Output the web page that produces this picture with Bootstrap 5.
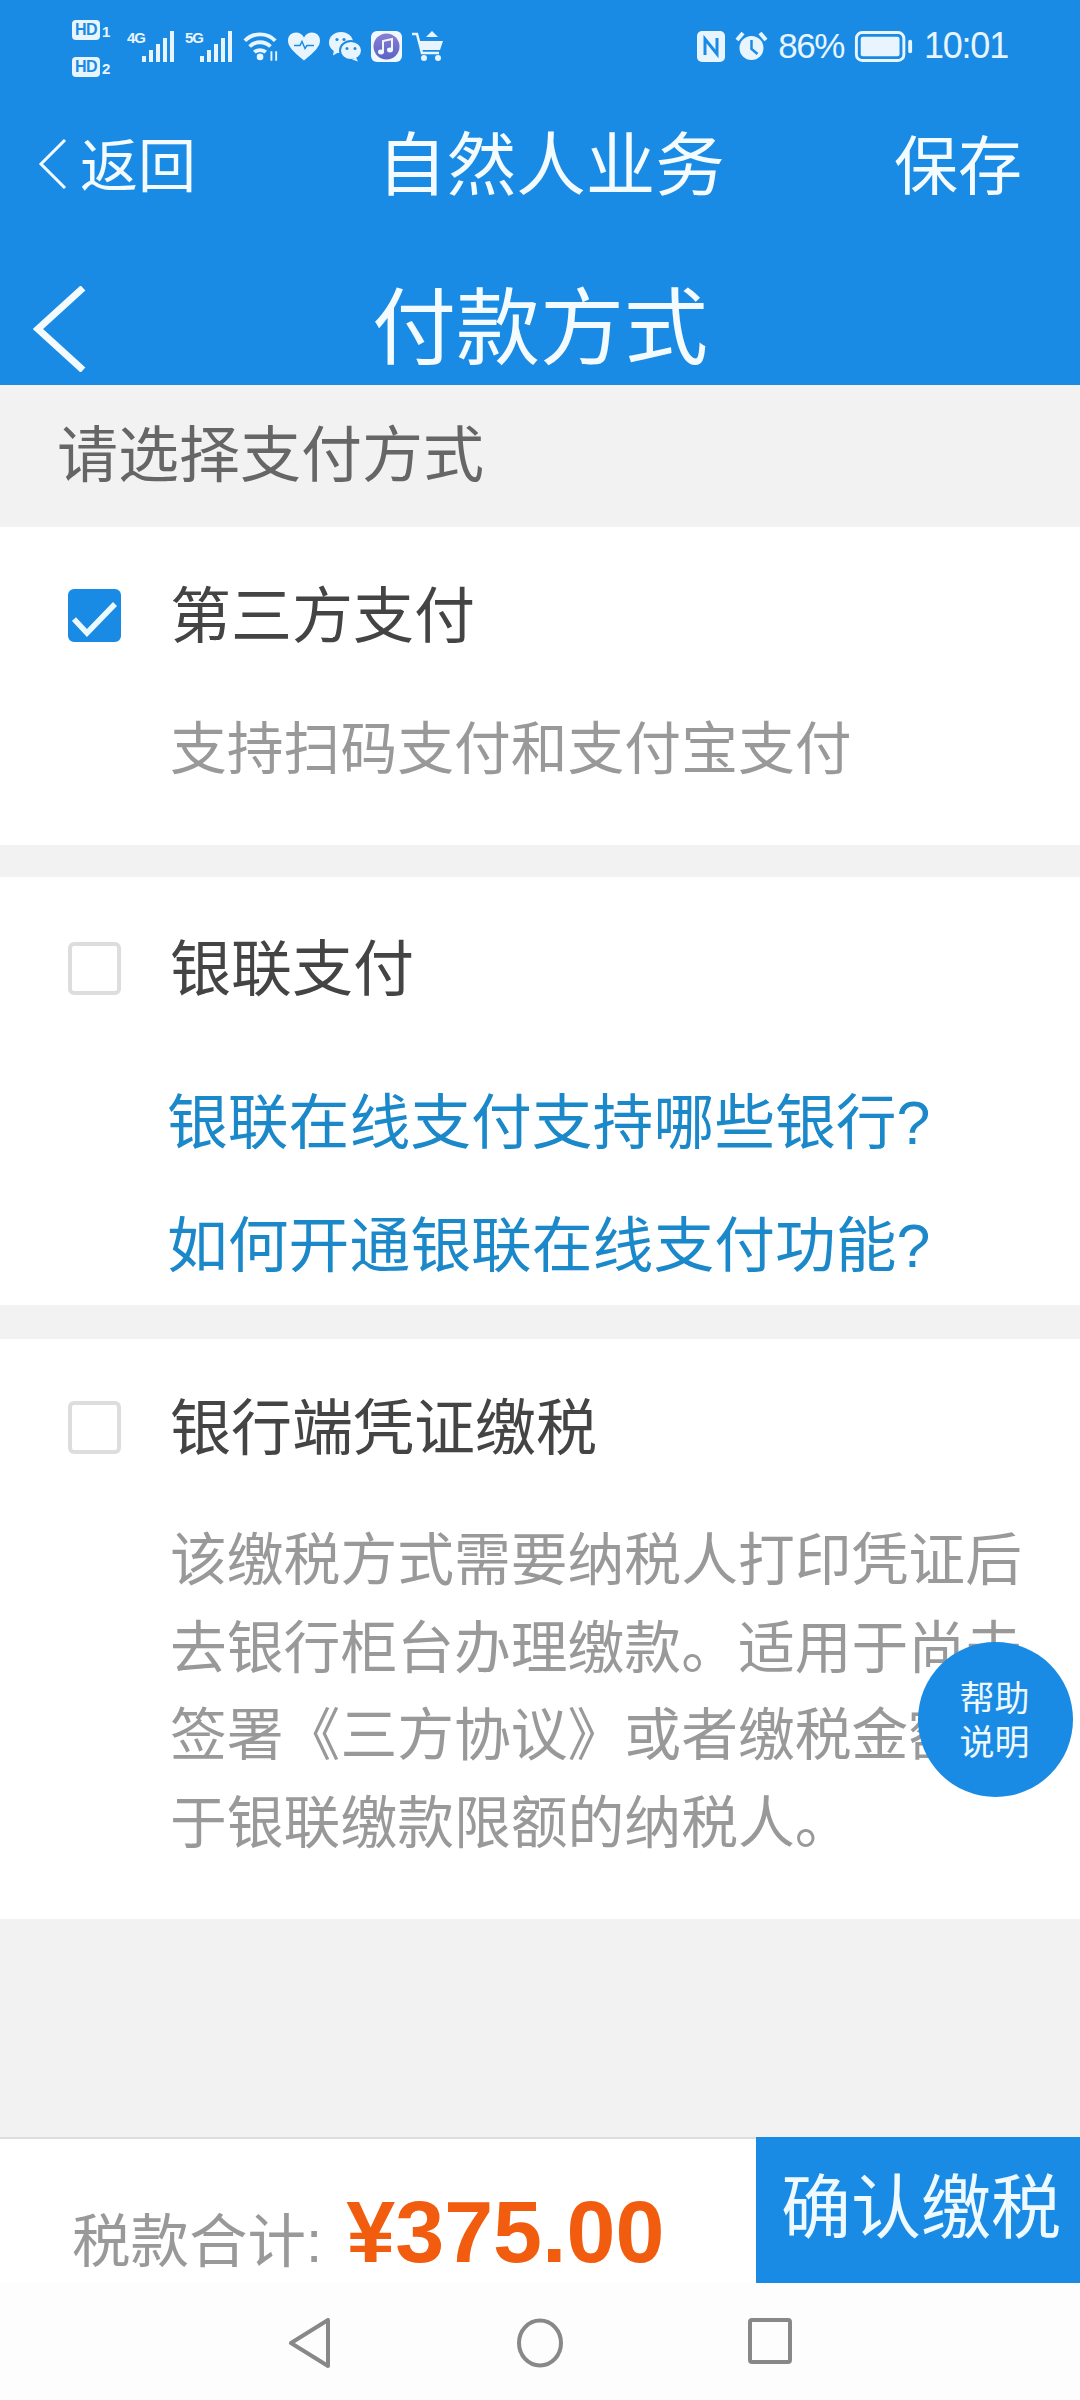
<!DOCTYPE html>
<html lang="zh-CN">
<head>
    <meta charset="UTF-8">
    <meta name="viewport" content="width=device-width, initial-scale=1.0">
    <title>付款方式</title>
    <link href="https://cdn.jsdelivr.net/npm/bootstrap@5.3.0/dist/css/bootstrap.min.css" rel="stylesheet">
    <style>
        html, body { height: 2400px; overflow: hidden; }
        body { font-family: "Liberation Sans", "Noto Sans CJK SC", sans-serif; background: #f2f2f2; color: #444; }
        .page-wrap { height: 2400px; }
        .app-head { background: #1a8be4; color: #f4fbff; height: 385px; }

        .status-row { height: 100px; padding: 20px 72px 0 72px; color: #e8f5ff; }
        .hd-stack { width: 46px; gap: 17px; }
        .hd-item { height: 20px; font-size: 15px; line-height: 24px; font-weight: 700; gap: 2px; }
        .hd-box { width: 28px; height: 20px; background: #e8f5ff; color: #1a8be4; border-radius: 4px; text-align: center; font-size: 16px; line-height: 20px; letter-spacing: -.5px; }
        .sig-item { margin-top: 11px; height: 31px; }
        .sig-label { font-size: 15px; line-height: 14px; font-weight: 700; margin-right: -3px; letter-spacing: -1px; }
        .status-icons { gap: 9px; }
        .status-right { gap: 10px; }
        .status-pct { font-size: 35px; line-height: 40px; margin-top: 6px; letter-spacing: -1.5px; }
        .status-time { font-size: 36px; line-height: 40px; margin-top: 6px; letter-spacing: -1.2px; }

        .nav-top { height: 128px; padding: 0 58px 0 38px; }
        .nav-back-text { font-size: 58px; line-height: 1; margin-left: 13px; padding-top: 6px; }
        .nav-title { font-size: 69.5px; line-height: 1; margin-left: 12px; padding-top: 6px; }
        .nav-save { font-size: 64px; line-height: 1; padding-top: 6px; }
        .nav-sub { height: 114px; margin-top: 44px; padding: 0 33px; display: grid; grid-template-columns: 1fr auto 1fr; align-items: center; }
        .nav-sub-title { font-size: 84px; line-height: 1; }

        .section-label { height: 142px; line-height: 142px; padding-left: 57px; font-size: 61px; color: #666; }

        .pay-block { background: #fff; padding-left: 68px; padding-right: 50px; }
        .pay-block + .pay-block { margin-top: 32px; }
        .pay-head { height: 88px; gap: 49px; font-size: 61px; line-height: 88px; color: #444; }
        .pay-head span { padding-top: 3px; }
        .pay-desc { padding-left: 102px; font-size: 56.8px; line-height: 87.5px; color: #999; }
        .pay-link { display: block; padding-left: 99px; font-size: 60.8px; line-height: 88px; color: #1a88c9; text-decoration: none; white-space: nowrap; }
        .block-a { padding-top: 44px; padding-bottom: 51px; }
        .block-a .pay-desc { margin-top: 47px; line-height: 88px; }
        .block-b { padding-top: 47px; padding-bottom: 15px; }
        .block-b .link-first { margin-top: 67px; }
        .block-b .link-second { margin-top: 35px; }
        .pay-block.block-c { margin-top: 34px; padding-top: 44px; padding-bottom: 52px; }
        .block-c .pay-desc { margin-top: 46px; }

        .pay-check.form-check-input { width: 53px; height: 53px; margin: 0; flex: none; border: 4px solid #ddd; border-radius: 6px; background-color: #fff; }
        .pay-check.form-check-input:checked { background-color: #1a8be4; border-color: #1a8be4; }
        .pay-check.form-check-input:checked[type=checkbox] {
            --bs-form-check-bg-image: url("data:image/svg+xml,%3csvg xmlns='http://www.w3.org/2000/svg' viewBox='0 0 53 53'%3e%3cpath fill='none' stroke='%23eafaff' stroke-width='5.5' d='M6 30l13 14L47 15'/%3e%3c/svg%3e");
            background-size: 53px 53px;
        }

        .help-fab { position: absolute; left: 918px; top: 1642px; width: 155px; height: 155px; padding: 2px 2px 0 0; border: 0; border-radius: 50%; background: #1a8be4; color: #eef9ff; font-size: 35px; line-height: 44px; }

        .spacer-grey { background: #f2f2f2; }
        .pay-foot { height: 146px; background: #fff; border-top: 2px solid #ddd; }
        .foot-total { padding: 43px 0 0 72px; }
        .foot-label { font-size: 58.5px; line-height: 100px; color: #999; }
        .foot-money { font-size: 88px; line-height: 100px; font-weight: 700; color: #f25c0f; margin-left: 24px; }
        .foot-btn.btn { width: 324px; height: 146px; margin-top: -2px; padding: 0 0 2px 6px; border: 0; border-radius: 0; background: #1a8be4; color: #eefaff; font-size: 70px; line-height: 1; white-space: nowrap; }
        .sys-nav { height: 117px; background: #fdfdfd; padding-top: 35px; padding-left: 288px; gap: 185px; }
    </style>
</head>
<body>
    <div class="page-wrap d-flex flex-column">
        <header class="app-head">
            <!-- status bar -->
            <div class="status-row d-flex justify-content-between align-items-start">
                <div class="d-flex status-icons">
                    <div class="hd-stack d-flex flex-column">
                        <div class="hd-item d-flex"><span class="hd-box">HD</span><span>1</span></div>
                        <div class="hd-item d-flex"><span class="hd-box">HD</span><span>2</span></div>
                    </div>
                    <div class="sig-item d-flex">
                        <span class="sig-label">4G</span>
                        <svg width="34" height="31" viewBox="0 0 34 31" fill="currentColor"><rect x="0" y="25" width="4" height="6"/><rect x="7" y="19" width="4" height="12"/><rect x="14" y="13" width="4" height="18"/><rect x="21" y="7" width="4" height="24"/><rect x="28" y="0" width="4" height="31"/></svg>
                    </div>
                    <div class="sig-item d-flex">
                        <span class="sig-label">5G</span>
                        <svg width="34" height="31" viewBox="0 0 34 31" fill="currentColor"><rect x="0" y="25" width="4" height="6"/><rect x="7" y="19" width="4" height="12"/><rect x="14" y="13" width="4" height="18"/><rect x="21" y="7" width="4" height="24"/><rect x="28" y="0" width="4" height="31"/></svg>
                    </div>
                    <svg class="sig-item" width="36" height="32" viewBox="0 0 38 32" fill="none" stroke="currentColor" stroke-width="4"><path d="M2 10C10 1 26 1 34 10"/><path d="M7 16c6-6 16-6 22 0"/><path d="M12 22c3-3 9-3 12 0"/><circle cx="18" cy="27" r="3.5" fill="currentColor" stroke="none"/><path d="M30 21v10M35 21v10" stroke-width="2"/></svg>
                    <svg class="sig-item" width="32" height="28" viewBox="0 0 32 28"><path d="M16 28C5 19 0 14 0 8c0-9 12-11 16-3 4-8 16-6 16 3 0 6-5 11-16 20z" fill="currentColor"/><path d="M6 13h6l2-4 3 7 2-3h7" fill="none" stroke="#1a8be4" stroke-width="1.5"/></svg>
                    <svg class="sig-item" width="33" height="30" viewBox="0 0 33 30" fill="currentColor"><ellipse cx="12" cy="11" rx="12" ry="10.5"/><path d="M5 18l-1 6 7-4z"/><ellipse cx="22" cy="19" rx="11" ry="9.5" stroke="#1a8be4" stroke-width="2"/><path d="M27 26l2 4-6-2z"/><circle cx="8" cy="8" r="1.6" fill="#1a8be4"/><circle cx="15" cy="8" r="1.6" fill="#1a8be4"/><circle cx="18" cy="17" r="1.5" fill="#1a8be4"/><circle cx="26" cy="17" r="1.5" fill="#1a8be4"/></svg>
                    <svg class="sig-item" width="31" height="31" viewBox="0 0 31 31"><defs><linearGradient id="musicFill" x1="0" y1="0" x2="0" y2="1"><stop offset="0" stop-color="#8a7fd0"/><stop offset="1" stop-color="#5a63c8"/></linearGradient></defs><rect width="31" height="31" rx="6" fill="#f2f8ff"/><circle cx="15.5" cy="15.5" r="13" fill="url(#musicFill)"/><path d="M12 21V10l9-2v11" fill="none" stroke="#f2f8ff" stroke-width="2"/><ellipse cx="10" cy="21" rx="3" ry="2.4" fill="#f2f8ff"/><ellipse cx="19" cy="19" rx="3" ry="2.4" fill="#f2f8ff"/></svg>
                    <svg class="sig-item" width="33" height="31" viewBox="0 0 33 31" fill="none" stroke="currentColor"><path d="M1 3h5l5 19h17" stroke-width="2.5"/><path d="M8 10h24l-3 9H11z" fill="currentColor" stroke="none"/><path d="M15 6l6-6 6 6z" fill="currentColor" stroke="none"/><circle cx="13" cy="27" r="3" fill="currentColor" stroke="none"/><circle cx="27" cy="27" r="3" fill="currentColor" stroke="none"/></svg>
                </div>
                <div class="d-flex status-right">
                    <svg class="sig-item" width="28" height="31" viewBox="0 0 28 31" fill="currentColor"><rect width="28" height="31" rx="5"/><path d="M8 24V8l12 15V7" fill="none" stroke="#1a8be4" stroke-width="3"/></svg>
                    <svg class="sig-item" width="33" height="31" viewBox="0 0 33 31" fill="none" stroke="currentColor"><circle cx="16.5" cy="17" r="12" fill="currentColor" stroke="none"/><path d="M16.5 9v9l6 5" stroke="#1a8be4" stroke-width="2.5"/><path d="M2 9l6-7M31 9l-6-7" stroke-width="4"/></svg>
                    <span class="status-pct">86%</span>
                    <svg class="sig-item" width="60" height="32" viewBox="0 0 60 32"><rect x="1.5" y="1.5" width="49" height="29" rx="6" fill="none" stroke="currentColor" stroke-width="3"/><rect x="6" y="6" width="40" height="20" rx="2" fill="currentColor"/><rect x="55" y="9" width="4" height="14" rx="2" fill="currentColor"/></svg>
                    <span class="status-time">10:01</span>
                </div>
            </div>
            <!-- outer nav -->
            <div class="nav-top d-flex justify-content-between align-items-center">
                <div class="d-flex align-items-center">
                    <svg width="29" height="50" viewBox="0 0 29 50" fill="none" stroke="currentColor" stroke-width="3"><path d="M27 1L3 25l24 24"/></svg>
                    <span class="nav-back-text">返回</span>
                </div>
                <div class="nav-title">自然人业务</div>
                <div class="nav-save">保存</div>
            </div>
            <!-- inner nav -->
            <div class="nav-sub">
                <svg width="53" height="86" viewBox="0 0 53 86" fill="none" stroke="currentColor" stroke-width="7"><path d="M50 2L5 43l45 41"/></svg>
                <div class="nav-sub-title">付款方式</div>
                <div></div>
            </div>
        </header>

        <div class="section-label">请选择支付方式</div>

        <section class="pay-block block-a">
            <label class="pay-head d-flex align-items-center">
                <input class="pay-check form-check-input" type="checkbox" checked>
                <span>第三方支付</span>
            </label>
            <div class="pay-desc">支持扫码支付和支付宝支付</div>
        </section>

        <section class="pay-block block-b">
            <label class="pay-head d-flex align-items-center">
                <input class="pay-check form-check-input" type="checkbox">
                <span>银联支付</span>
            </label>
            <a class="pay-link link-first" href="#">银联在线支付支持哪些银行?</a>
            <a class="pay-link link-second" href="#">如何开通银联在线支付功能?</a>
        </section>

        <section class="pay-block block-c">
            <label class="pay-head d-flex align-items-center">
                <input class="pay-check form-check-input" type="checkbox">
                <span>银行端凭证缴税</span>
            </label>
            <div class="pay-desc">该缴税方式需要纳税人打印凭证后去银行柜台办理缴款。适用于尚未签署《三方协议》或者缴税金额大于银联缴款限额的纳税人。</div>
        </section>

        <div class="spacer-grey flex-grow-1"></div>

        <footer class="pay-foot d-flex justify-content-between">
            <div class="foot-total d-flex align-items-baseline">
                <span class="foot-label">税款合计:</span>
                <span class="foot-money">¥375.00</span>
            </div>
            <button class="foot-btn btn" type="button">确认缴税</button>
        </footer>

        <nav class="sys-nav d-flex align-items-start">
            <svg width="44" height="50" viewBox="0 0 44 50" fill="none" stroke="#888" stroke-width="4" stroke-linejoin="round"><path d="M40 2v46L3 25z"/></svg>
            <svg width="46" height="50" viewBox="0 0 46 50" fill="none" stroke="#888" stroke-width="4"><ellipse cx="23" cy="25" rx="21" ry="22.5"/></svg>
            <svg width="44" height="46" viewBox="0 0 44 46" fill="none" stroke="#888" stroke-width="4"><rect x="2" y="2" width="40" height="42" rx="2"/></svg>
        </nav>
    </div>

    <button class="help-fab" type="button">帮助<br>说明</button>

    <script src="https://cdn.jsdelivr.net/npm/bootstrap@5.3.0/dist/js/bootstrap.bundle.min.js"></script>
</body>
</html>
